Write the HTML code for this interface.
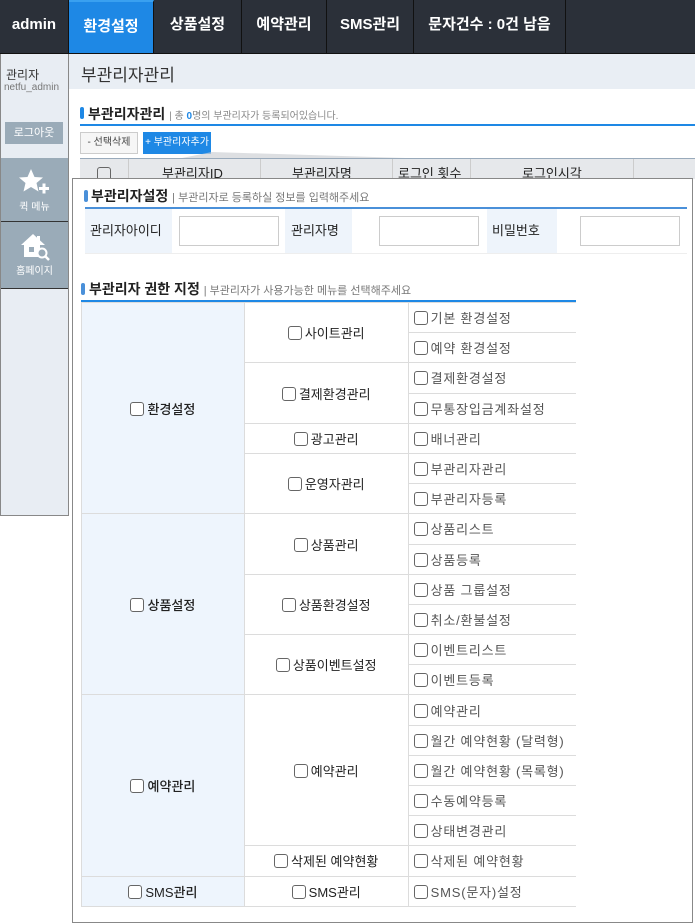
<!DOCTYPE html>
<html><head><meta charset="utf-8"><style>
*{margin:0;padding:0;box-sizing:border-box}
body{width:695px;height:924px;position:relative;overflow:hidden;background:#fff;font-family:"Liberation Sans","Noto Sans CJK KR",sans-serif;color:#222}
.a{position:absolute}
.top{left:0;top:0;width:695px;height:54px;background:#2b3039;border-bottom:1px solid #111}
.m{position:absolute;top:0;height:53px;line-height:50px;color:#fff;font-weight:bold;font-size:15px;text-align:center;border-right:1px solid #111}
.cb{display:inline-block;width:14px;height:14px;border:1px solid #666;border-radius:3px;vertical-align:-2px;margin-right:3px;background:#fff}
table{border-collapse:collapse}
td{border:1px solid #dcdcdc;height:30.2px;font-size:13px}
.c1{background:#eef5fd;text-align:center;width:163px;font-weight:500}
.c2{text-align:center;width:164px}
.c3{width:168px;padding-left:5px;color:#555;letter-spacing:0.8px;border-right:none}
</style></head><body>
<div class="a top"></div>
<div class="m" style="left:0;width:69px">admin</div>
<div class="m" style="left:69px;width:85px;background:#1e88e5;border-top:2px solid #39a0f0">환경설정</div>
<div class="m" style="left:154px;width:88px">상품설정</div>
<div class="m" style="left:242px;width:85px">예약관리</div>
<div class="m" style="left:327px;width:87px">SMS관리</div>
<div class="m" style="left:414px;width:152px">문자건수 : 0건 남음</div>

<div class="a" style="left:0;top:54px;width:69px;height:462px;background:#e8edf3;border:1px solid #888;border-top:none"></div>
<div class="a" style="left:6px;top:66px;font-size:12px;color:#333">관리자</div>
<div class="a" style="left:4px;top:82px;font-size:10px;color:#777">netfu_admin</div>
<div class="a" style="left:5px;top:122px;width:58px;height:22px;background:#9aabb8;color:#fff;font-size:11px;text-align:center;line-height:22px">로그아웃</div>
<div class="a" style="left:1px;top:158px;width:67px;height:64px;background:#9aabb8;border-bottom:1px solid #333"></div>
<div class="a" style="left:1px;top:222px;width:67px;height:67px;background:#9aabb8;border-bottom:1px solid #333"></div>
<svg class="a" style="left:18px;top:168px" width="34" height="28"><polygon points="13,1 16.5,9 25,9.5 18.5,15 20.5,23.5 13,19 5.5,23.5 7.5,15 1,9.5 9.5,9" fill="#fff"/><rect x="21" y="19" width="10" height="3" fill="#fff"/><rect x="24.5" y="15.5" width="3" height="10" fill="#fff"/></svg>
<div class="a" style="left:0;top:198px;width:69px;text-align:center;font-size:10px;color:#fff">퀵 메뉴</div>
<svg class="a" style="left:20px;top:233px" width="32" height="28"><polygon points="13,1 1,12 4,12 4,24 20,24 20,12 25,12" fill="#fff"/><rect x="17" y="3" width="3" height="6" fill="#fff"/><rect x="9" y="14" width="5" height="5" fill="#9aabb8"/><circle cx="22" cy="20" r="4.5" fill="#9aabb8" stroke="#fff" stroke-width="2"/><line x1="25" y1="23" x2="29" y2="27" stroke="#fff" stroke-width="2.5"/></svg>
<div class="a" style="left:0;top:262px;width:69px;text-align:center;font-size:10px;color:#fff">홈페이지</div>

<div class="a" style="left:69px;top:54px;width:626px;height:35px;background:#e9eef4"></div>
<div class="a" style="left:81px;top:61px;font-size:17px;color:#333">부관리자관리</div>
<div class="a" style="left:80px;top:107px;width:4px;height:12px;background:#1e88e5;border-radius:2px"></div>
<div class="a" style="left:88px;top:104px;font-size:14px;font-weight:bold">부관리자관리 <span style="font-weight:normal;font-size:10px;color:#888">| 총 <b style="color:#1e88e5">0</b>명의 부관리자가 등록되어있습니다.</span></div>
<div class="a" style="left:80px;top:124px;width:615px;height:2px;background:#1e88e5"></div>
<div class="a" style="left:80px;top:132px;width:58px;height:22px;border:1px solid #ccc;background:#f6f6f6;font-size:10px;line-height:20px;text-align:center;color:#444">- 선택삭제</div>
<div class="a" style="left:143px;top:132px;width:68px;height:22px;background:#1e88e5;font-size:10px;line-height:22px;text-align:center;color:#fff">+ 부관리자추가</div>
<svg class="a" style="left:72px;top:150px" width="623" height="30"><polygon points="140,2 400,10 623,30 0,30" fill="#cfd2d6" opacity=".7"/></svg>
<div class="a" style="left:80px;top:158px;width:615px;height:1px;background:#9ab"></div>
<div class="a" style="left:80px;top:159px;width:615px;height:20px;background:#e6e8eb"></div>
<div class="a" style="left:97px;top:167px;width:14px;height:14px;border:1px solid #666;border-radius:3px"></div>
<div class="a" style="left:162px;top:163px;font-size:13px">부관리자ID</div>
<div class="a" style="left:292px;top:163px;font-size:13px">부관리자명</div>
<div class="a" style="left:398px;top:163px;font-size:13px">로그인 횟수</div>
<div class="a" style="left:522px;top:163px;font-size:13px">로그인시각</div>
<div class="a" style="left:128px;top:159px;width:1px;height:20px;background:#ccc"></div>
<div class="a" style="left:260px;top:159px;width:1px;height:20px;background:#ccc"></div>
<div class="a" style="left:392px;top:159px;width:1px;height:20px;background:#ccc"></div>
<div class="a" style="left:470px;top:159px;width:1px;height:20px;background:#ccc"></div>
<div class="a" style="left:633px;top:159px;width:1px;height:20px;background:#ccc"></div>

<div class="a" style="left:72px;top:178px;width:621px;height:745px;background:#fff;border:1px solid #888"></div>
<div class="a" style="left:84px;top:190px;width:4px;height:12px;background:#4a90d9;border-radius:2px"></div>
<div class="a" style="left:91px;top:186px;font-size:14px;font-weight:bold">부관리자설정 <span style="font-weight:normal;font-size:11px;color:#777">| 부관리자로 등록하실 정보를 입력해주세요</span></div>
<div class="a" style="left:85px;top:207px;width:602px;height:2px;background:#4a90d9"></div>
<div class="a" style="left:85px;top:209px;width:602px;height:45px;border-bottom:1px solid #eee"></div>
<div class="a" style="left:85px;top:209px;width:87px;height:44px;background:#eef4fb;font-size:13px;line-height:44px;padding-left:5px">관리자아이디</div>
<div class="a" style="left:179px;top:216px;width:100px;height:30px;border:1px solid #ccc"></div>
<div class="a" style="left:285px;top:209px;width:67px;height:44px;background:#eef4fb;font-size:13px;line-height:44px;padding-left:6px">관리자명</div>
<div class="a" style="left:379px;top:216px;width:100px;height:30px;border:1px solid #ccc"></div>
<div class="a" style="left:487px;top:209px;width:70px;height:44px;background:#eef4fb;font-size:13px;line-height:44px;padding-left:5px">비밀번호</div>
<div class="a" style="left:580px;top:216px;width:100px;height:30px;border:1px solid #ccc"></div>

<div class="a" style="left:81px;top:283px;width:4px;height:12px;background:#4a90d9;border-radius:2px"></div>
<div class="a" style="left:89px;top:279px;font-size:14px;font-weight:bold">부관리자 권한 지정 <span style="font-weight:normal;font-size:11px;color:#777">| 부관리자가 사용가능한 메뉴를 선택해주세요</span></div>
<div class="a" style="left:81px;top:300px;width:495px;height:2px;background:#1e88e5"></div>
<table class="a" style="left:81px;top:302px;width:495px">
<tr><td class="c1" rowspan="7"><span class="cb"></span>환경설정</td><td class="c2" rowspan="2"><span class="cb"></span>사이트관리</td><td class="c3"><span class="cb"></span>기본 환경설정</td></tr>
<tr><td class="c3"><span class="cb"></span>예약 환경설정</td></tr>
<tr><td class="c2" rowspan="2"><span class="cb"></span>결제환경관리</td><td class="c3"><span class="cb"></span>결제환경설정</td></tr>
<tr><td class="c3"><span class="cb"></span>무통장입금계좌설정</td></tr>
<tr><td class="c2"><span class="cb"></span>광고관리</td><td class="c3"><span class="cb"></span>배너관리</td></tr>
<tr><td class="c2" rowspan="2"><span class="cb"></span>운영자관리</td><td class="c3"><span class="cb"></span>부관리자관리</td></tr>
<tr><td class="c3"><span class="cb"></span>부관리자등록</td></tr>
<tr><td class="c1" rowspan="6"><span class="cb"></span>상품설정</td><td class="c2" rowspan="2"><span class="cb"></span>상품관리</td><td class="c3"><span class="cb"></span>상품리스트</td></tr>
<tr><td class="c3"><span class="cb"></span>상품등록</td></tr>
<tr><td class="c2" rowspan="2"><span class="cb"></span>상품환경설정</td><td class="c3"><span class="cb"></span>상품 그룹설정</td></tr>
<tr><td class="c3"><span class="cb"></span>취소/환불설정</td></tr>
<tr><td class="c2" rowspan="2"><span class="cb"></span>상품이벤트설정</td><td class="c3"><span class="cb"></span>이벤트리스트</td></tr>
<tr><td class="c3"><span class="cb"></span>이벤트등록</td></tr>
<tr><td class="c1" rowspan="6"><span class="cb"></span>예약관리</td><td class="c2" rowspan="5"><span class="cb"></span>예약관리</td><td class="c3"><span class="cb"></span>예약관리</td></tr>
<tr><td class="c3"><span class="cb"></span>월간 예약현황 (달력형)</td></tr>
<tr><td class="c3"><span class="cb"></span>월간 예약현황 (목록형)</td></tr>
<tr><td class="c3"><span class="cb"></span>수동예약등록</td></tr>
<tr><td class="c3"><span class="cb"></span>상태변경관리</td></tr>
<tr><td class="c2"><span class="cb"></span>삭제된 예약현황</td><td class="c3"><span class="cb"></span>삭제된 예약현황</td></tr>
<tr><td class="c1"><span class="cb"></span>SMS관리</td><td class="c2"><span class="cb"></span>SMS관리</td><td class="c3"><span class="cb"></span>SMS(문자)설정</td></tr>
</table>
</body></html>
